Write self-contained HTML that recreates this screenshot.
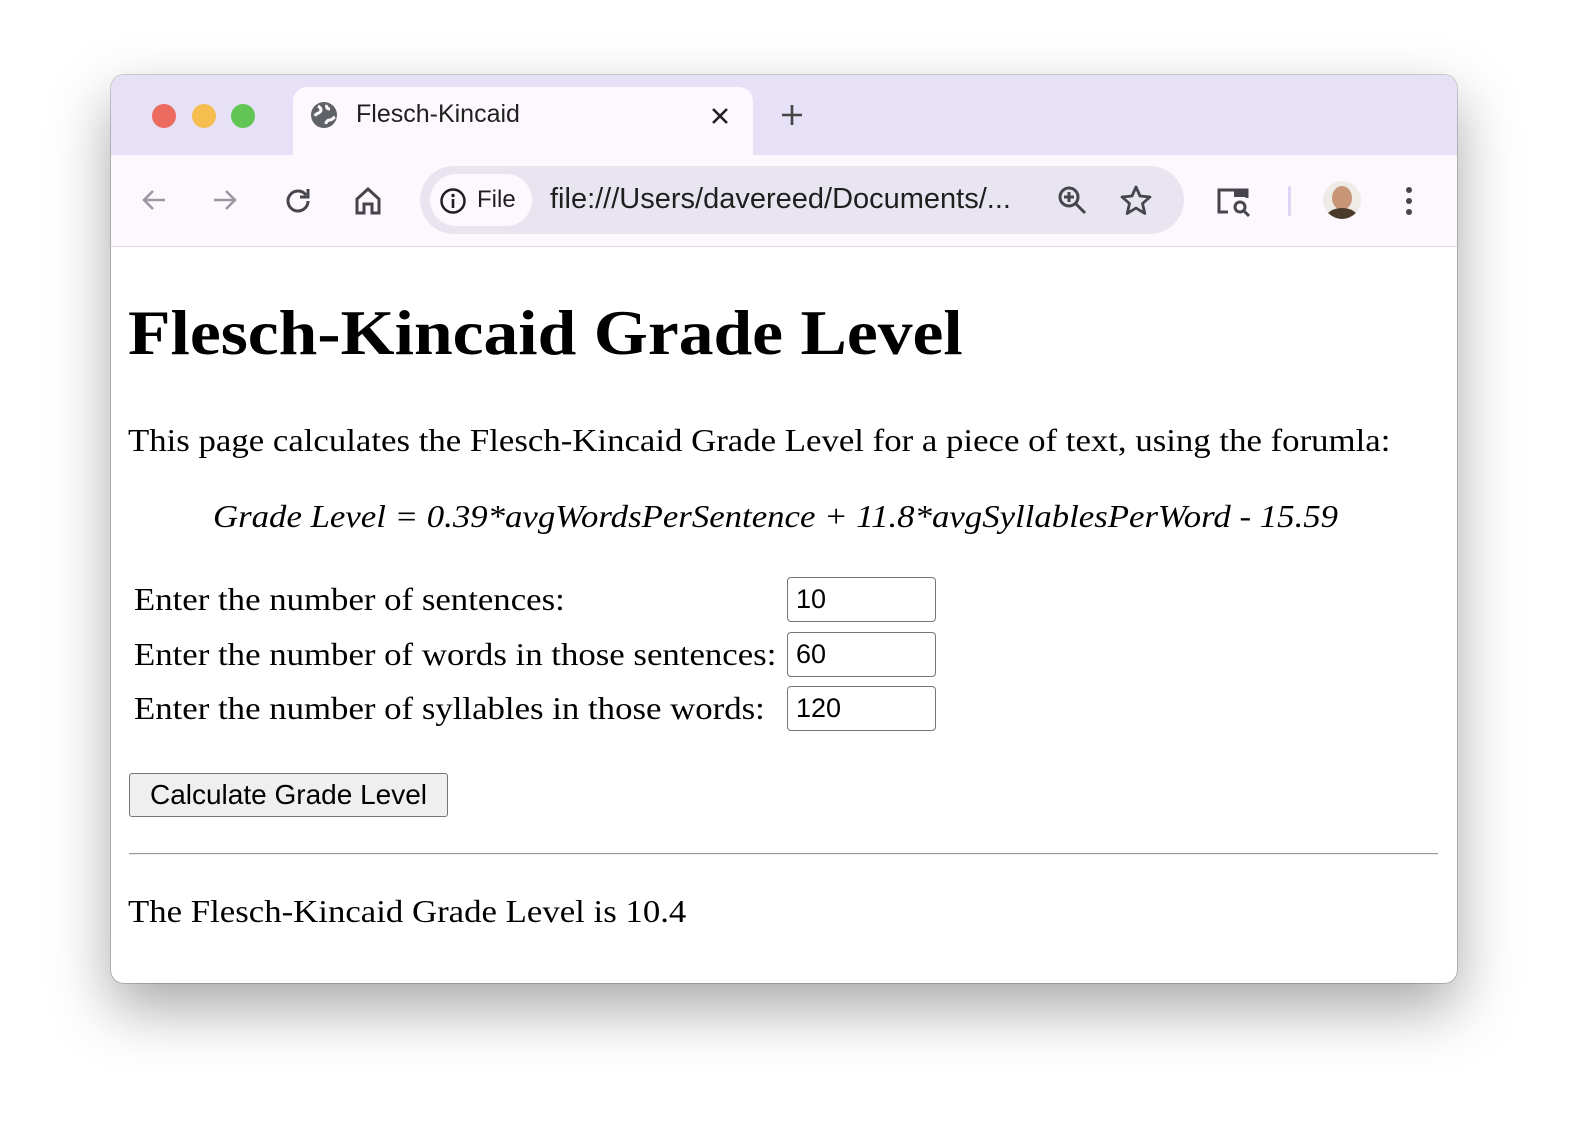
<!DOCTYPE html>
<html><head><style>
body{margin:0;width:1584px;height:1142px;background:#fff;position:relative;overflow:hidden;font-family:"Liberation Serif",serif}
.win{position:absolute;left:111px;top:75px;width:1346px;height:908px;border-radius:13px;overflow:hidden;background:#fff;box-shadow:0 25px 60px rgba(0,0,0,.35),0 0 0 1px rgba(0,0,0,.18)}
.tabbar{position:absolute;left:0;top:0;width:100%;height:80px;background:#e6e1f6}
.tool{position:absolute;left:0;top:80px;width:100%;height:91px;background:#fcf8fe;border-bottom:1px solid #dcd8e4}
.tab{position:absolute;left:182px;top:12px;width:460px;height:70px;background:#fcf8fe;border-radius:14px 14px 0 0}
.dot{position:absolute;top:29px;width:24px;height:24px;border-radius:50%}
.s{position:absolute;font-family:"Liberation Sans",sans-serif;color:#1f1f1f;white-space:nowrap}
.abs{position:absolute;white-space:nowrap}
.sx{transform:scaleX(1.087);transform-origin:0 0}
.inp{position:absolute;border:1px solid #767676;border-radius:4px;font-family:"Liberation Sans",sans-serif;font-size:27px;line-height:42px;padding-left:8px;box-sizing:border-box;width:149px;height:45px}
</style></head><body>
<div class="win">
<div class="tabbar"></div>
<div class="dot" style="left:41px;background:#ed6a5e"></div>
<div class="dot" style="left:81px;background:#f5bf4f"></div>
<div class="dot" style="left:120px;background:#61c554"></div>
<div class="tab"></div>
<svg class="abs" style="left:198px;top:25px" width="30" height="30" viewBox="0 0 30 30"><circle cx="15" cy="15" r="13" fill="#5f6368"/><path d="M9 6c3 2 4 4 2 6s-4 1-5 4M17 24c0-3 2-4 4-4s3-2 5-3M18 5c-1 2 0 4 3 4" stroke="#fcf8fe" stroke-width="3" fill="none"/></svg>
<div class="s" style="left:245px;top:25px;font-size:25px">Flesch-Kincaid</div>
<svg class="abs" style="left:600px;top:32px" width="18" height="18" viewBox="0 0 18 18"><path d="M2 2l14 14M16 2L2 16" stroke="#1f1f1f" stroke-width="2.6"/></svg>
<svg class="abs" style="left:670px;top:29px" width="22" height="22" viewBox="0 0 22 22"><path d="M11 1v20M1 11h20" stroke="#444" stroke-width="2.6"/></svg>
<div class="tool"></div>
<svg class="abs" style="left:30px;top:113px" width="26" height="24" viewBox="0 0 26 24"><path d="M24 12H3M12 3l-9 9 9 9" fill="none" stroke="#9a98a0" stroke-width="2.6"/></svg>
<svg class="abs" style="left:101px;top:113px" width="26" height="24" viewBox="0 0 26 24"><path d="M2 12h21M14 3l9 9-9 9" fill="none" stroke="#9a98a0" stroke-width="2.6"/></svg>
<svg class="abs" style="left:173px;top:111px" width="28" height="28" viewBox="0 0 28 28"><path d="M22 9A10 10 0 1 0 24 15" fill="none" stroke="#46444c" stroke-width="3"/><path d="M24 3v8h-8" fill="none" stroke="#46444c" stroke-width="3"/></svg>
<svg class="abs" style="left:243px;top:111px" width="28" height="30" viewBox="0 0 28 30"><path d="M3 13L14 3l11 10v14h-7v-9h-8v9H3z" fill="none" stroke="#46444c" stroke-width="3"/></svg>
<div class="abs" style="left:309px;top:91px;width:764px;height:68px;border-radius:34px;background:#e8e5f0"></div>
<div class="abs" style="left:319px;top:99px;width:102px;height:52px;border-radius:26px;background:#fcf8fe"></div>
<svg class="abs" style="left:328px;top:112px" width="28" height="28" viewBox="0 0 28 28"><circle cx="14" cy="14" r="11.5" fill="none" stroke="#1f1f1f" stroke-width="2.5"/><rect x="12.7" y="12" width="2.6" height="9" fill="#1f1f1f"/><circle cx="14" cy="8.5" r="1.7" fill="#1f1f1f"/></svg>
<div class="s" style="left:366px;top:111px;font-size:24px">File</div>
<div class="s" style="left:439px;top:108px;font-size:29px">file:///Users/davereed/Documents/...</div>
<svg class="abs" style="left:946px;top:110px" width="32" height="32" viewBox="0 0 32 32"><circle cx="12" cy="12" r="9" fill="none" stroke="#46444c" stroke-width="3"/><path d="M12 7v10M7 12h10M19 19l9 9" stroke="#46444c" stroke-width="3"/></svg>
<svg class="abs" style="left:1008px;top:109px" width="34" height="32" viewBox="0 0 34 32"><path d="M17 3l4 9 10 1-7.5 6.5 2.3 10L17 24l-8.8 5.5 2.3-10L3 13l10-1z" fill="none" stroke="#46444c" stroke-width="2.8" stroke-linejoin="round"/></svg>
<svg class="abs" style="left:1105px;top:110px" width="38" height="34" viewBox="0 0 38 34"><path d="M12 27H3V5h28v8" fill="none" stroke="#46444c" stroke-width="3"/><rect x="18" y="4" width="14" height="8" fill="#46444c"/><circle cx="24" cy="22" r="5" fill="none" stroke="#46444c" stroke-width="3"/><path d="M28 26l5 5" stroke="#46444c" stroke-width="3"/></svg>
<div class="abs" style="left:1177px;top:111px;width:3px;height:30px;background:#dcd6f4;border-radius:2px"></div>
<div class="abs" style="left:1212px;top:106px;width:38px;height:38px;border-radius:50%;background:#efece8;overflow:hidden"><div style="position:absolute;left:9px;top:5px;width:20px;height:24px;border-radius:50%;background:#c99577"></div><div style="position:absolute;left:3px;top:27px;width:32px;height:20px;border-radius:50%;background:#4a3a2a"></div></div>
<svg class="abs" style="left:1294px;top:110px" width="8" height="32" viewBox="0 0 8 32"><circle cx="4" cy="5" r="3" fill="#46444c"/><circle cx="4" cy="16" r="3" fill="#46444c"/><circle cx="4" cy="27" r="3" fill="#46444c"/></svg>

<div class="abs sx" style="left:17px;top:218px;font-size:64px;font-weight:bold;line-height:80px">Flesch-Kincaid Grade Level</div>
<div class="abs sx" style="left:17px;top:345px;font-size:32px;line-height:40px">This page calculates the Flesch-Kincaid Grade Level for a piece of text, using the forumla:</div>
<div class="abs sx" style="left:102px;top:421px;font-size:32px;line-height:40px;font-style:italic">Grade Level = 0.39*avgWordsPerSentence + 11.8*avgSyllablesPerWord - 15.59</div>
<div class="abs sx" style="left:23px;top:504px;font-size:32px;line-height:40px">Enter the number of sentences:</div>
<div class="abs sx" style="left:23px;top:559px;font-size:32px;line-height:40px">Enter the number of words in those sentences:</div>
<div class="abs sx" style="left:23px;top:613px;font-size:32px;line-height:40px">Enter the number of syllables in those words:</div>
<div class="inp" style="left:676px;top:502px">10</div>
<div class="inp" style="left:676px;top:557px">60</div>
<div class="inp" style="left:676px;top:611px">120</div>
<div class="abs" style="left:18px;top:698px;width:319px;height:44px;box-sizing:border-box;border:1px solid #767676;border-radius:3px;background:#efefef;font-family:'Liberation Sans',sans-serif;font-size:28px;line-height:42px;text-align:center">Calculate Grade Level</div>
<div class="abs" style="left:18px;top:778px;width:1309px;height:0;border-top:1px solid #999;border-bottom:1px solid #eee"></div>
<div class="abs sx" style="left:17px;top:816px;font-size:32px;line-height:40px">The Flesch-Kincaid Grade Level is 10.4</div>
</div>
</body></html>
